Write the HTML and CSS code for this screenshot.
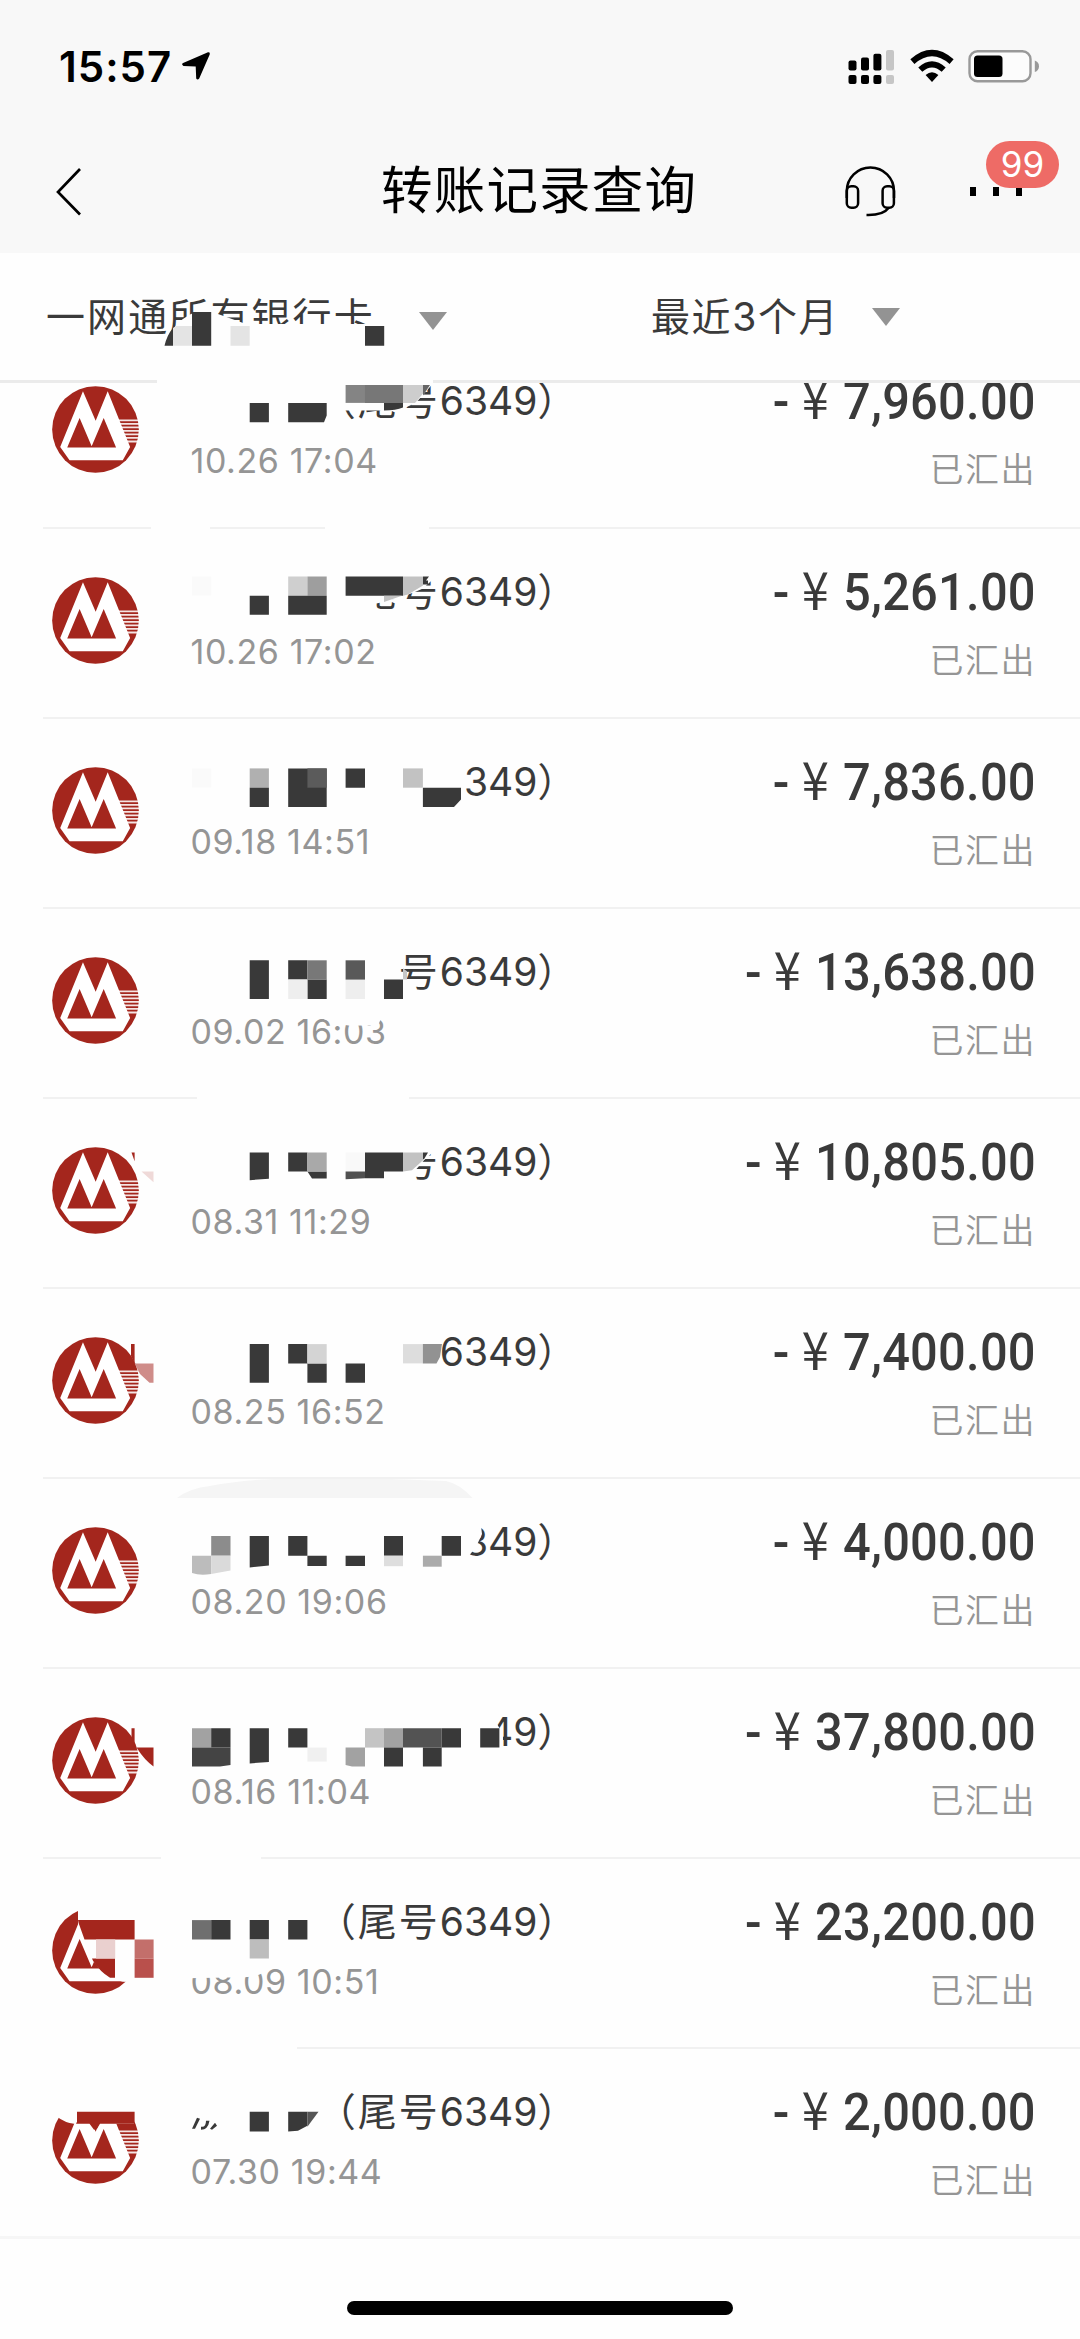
FILE: index.html
```html
<!DOCTYPE html>
<html lang="zh-CN">
<head>
<meta charset="utf-8">
<title>转账记录查询</title>
<link rel="stylesheet" href="styles.css">
</head>
<body>
<svg class="defs" width="0" height="0">
  <symbol id="cmb" viewBox="65.500 80 260 260">
    <circle cx="195.500" cy="210" r="129.500" fill="#a4261d"/>
    <path d="M262 180h64v5h-64zM262 190.500h64v5h-64zM262 201h64v5h-64zM262 211.500h64v5h-64zM262 222h64v5h-64zM262 232.500h64v5h-64zM262 243h64v6h-64z" fill="#fff" opacity=".88"/>
    <path d="M158 96L196 184L232 96L299 262L277 302H118L90 262Z" fill="#fff"/>
    <path d="M111 264L148 176L184 260L220 176L257 264Z" fill="#a4261d"/>
  </symbol>
</svg>
<div class="phone">
  <header class="top">
    <div class="status">
      <div class="clock">15:57</div>
      <svg class="loc" viewBox="0 0 30 30"><path d="M1.500 12.200L27 1.200Q29.500 .8 28.700 3.500L18.200 27.500Q16.500 29.500 15.200 27.500L14.700 15.500L2.500 15Q.3 13.800 1.500 12.200Z"/></svg>
      <svg class="sys" viewBox="848 49 192 36">
        <rect x="848.500" y="60.500" width="8" height="10" rx="2"/><rect x="861" y="57.500" width="8" height="13" rx="2"/><rect x="873.400" y="53.700" width="8" height="16.800" rx="2"/>
        <rect x="848.500" y="75" width="8" height="9" rx="2"/><rect x="861" y="75" width="8" height="9" rx="2"/><rect x="873.400" y="75" width="8" height="9" rx="2"/>
        <g fill="#c6c6c6"><rect x="886" y="50" width="8" height="20.500" rx="2"/><rect x="886" y="75" width="8" height="9" rx="2"/></g>
        <path d="M932 82L925.600 75Q932 69.500 938.400 75Z"/>
        <path d="M920.300 69.600Q932 59 943.700 69.600" fill="none" stroke="#000" stroke-width="6"/>
        <path d="M912.400 61.700Q932 44.500 951.600 61.700" fill="none" stroke="#000" stroke-width="6.200"/>
        <rect x="969.500" y="51.200" width="61" height="30" rx="8" fill="#fcfcfc" stroke="#999" stroke-width="2.400"/>
        <rect x="974" y="55.500" width="28.500" height="21.500" rx="3.500"/>
        <path d="M1034.800 60.500Q1039 62 1039 66.200Q1039 70.500 1034.800 72Z" fill="#999"/>
      </svg>
    </div>
    <div class="nav">
      <svg class="back" viewBox="0 0 30 50"><path d="M25 2L3 25L25 47.500" fill="none" stroke="#000" stroke-width="2.700"/></svg>
      <h1>转账记录查询</h1>
      <svg class="headset" viewBox="844 164 53 53" fill="none" stroke="#000" stroke-width="2.500">
        <path d="M846.800 197V190A23.600 23.600 0 0 1 894 190V197"/>
        <rect x="846.800" y="185.200" width="11.300" height="21.500" rx="4.500"/><rect x="882.600" y="185.200" width="11.300" height="21.500" rx="4.500"/>
        <path d="M888.500 207Q883 214.500 866.500 214"/>
      </svg>
      <div class="more">
        <svg class="dots" viewBox="0 0 52 9"><path d="M0 0h6v9H0zM23 0h6v9h-6zM46 0h6v9h-6z"/></svg>
        <span class="badge">99</span>
      </div>
    </div>
  </header>
  <section class="filters">
    <div class="filter card"><span>一网通所有银行卡</span><i class="arrow"></i></div>
    <div class="filter period"><span>最近3个月</span><i class="arrow"></i></div>
    <svg class="mosaic" viewBox="0 253 580 130" width="580" height="130">
      <path class="w" d="M164 346C170 330 182 315 200 311L218 314L246 324H386V350H164Z"/>
      <path class="w" d="M157 379H433V385H157Z"/>
      <path class="k" d="M164.500 345.700Q167 335 173 328V345.700ZM192 312h19.200v33.700H192zM365 326h19.200v19.700H365z"/>
      <path fill="#e4e4e4" d="M173 328L176 326H192V345.700H173ZM230.500 326h19.200v19.700h-19.200z"/>
    </svg>
  </section>
  <main class="list">
    <article class="row first">
      <svg class="logo"><use href="#cmb"/></svg>
      <div class="info"><div class="name"><span>（尾号</span>6349）</div><time>10.26 17:04</time></div>
      <div class="money"><div class="amount"><b>-</b><i>¥</i>7,960.00</div><div class="state">已汇出</div></div>
      <svg class="mosaic" viewBox="0 338.400 580 190.100">
        <path class="w" d="M335 372H433V384L418 401Q405 411 390 411H345Q337 412 335 415Z"/>
        <path fill="#848484" d="M345.600 384H365V403.300H345.600Z"/><path fill="#777" d="M365 384h38v19.300h-38z"/><path fill="#cdcdcd" d="M403 384H423V394L415 403.300H403Z"/><path fill="#666" d="M423 384H431L423 396Z"/>
        <path class="k" d="M249.700 403.300h19.200v19.400h-19.200zM288.200 403.300H326.700V416L324 422.700H288.200ZM384 403.300H403V408Q396 411 384 411Z"/>
        <path class="w" d="M151 525h59v6h-59zM325 525h104v6H325z"/>
      </svg>
    </article>
    <article class="row">
      <svg class="logo"><use href="#cmb"/></svg>
      <div class="info"><div class="name"><span>（尾号</span>6349）</div><time>10.26 17:02</time></div>
      <div class="money"><div class="amount"><b>-</b><i>¥</i>5,261.00</div><div class="state">已汇出</div></div>
      <svg class="mosaic" viewBox="0 528.500 580 190.100">
        <path class="w" d="M335 568H436V576L423 588Q410 594 390 600L372 604L370 614H335Z"/>
        <path fill="#fafafa" d="M192 576h19.200v19H192z"/><path fill="#cfcfcf" d="M288.200 576h19.200v19.300h-19.200z"/><path fill="#9e9e9e" d="M307.400 576h19.300v19.300h-19.300z"/>
        <path class="k" d="M249.700 595.300h19.200v19h-19.200zM288.200 595.300h38.500v19h-38.500zM345.600 576H403V595.300H345.600ZM423 576H429L426 580H428V584H423Z"/>
        <path fill="#c2c2c2" d="M403 576H423V585L408 594L403 595.300ZM384 595.300H402L384 601.500Z"/>
      </svg>
    </article>
    <article class="row">
      <svg class="logo"><use href="#cmb"/></svg>
      <div class="info"><div class="name">349）</div><time>09.18 14:51</time></div>
      <div class="money"><div class="amount"><b>-</b><i>¥</i>7,836.00</div><div class="state">已汇出</div></div>
      <svg class="mosaic" viewBox="0 718.600 580 190.100">
        <path fill="#fafafa" d="M192 768h19.200v19H192z"/><path fill="#b0b0b0" d="M249.700 768h19.200v19.500h-19.200z"/>
        <path class="k" d="M249.700 787.300h19.200v19.400h-19.200zM288.200 768h38.500v38.700h-38.500zM345.600 768H365V787.300H345.600ZM422.900 787.300H461V799L454 806.700H422.900Z"/>
        <path fill="#5b5b5b" d="M307.400 768h19.300v19.300h-19.300z"/><path fill="#c2c2c2" d="M403 768h19.900v19.300H403z"/>
      </svg>
    </article>
    <article class="row">
      <svg class="logo"><use href="#cmb"/></svg>
      <div class="info"><div class="name"><span>号</span>6349）</div><time>09.02 16:03</time></div>
      <div class="money"><div class="amount"><b>-</b><i>¥</i>13,638.00</div><div class="state">已汇出</div></div>
      <svg class="mosaic" viewBox="0 908.700 580 190.100">
        <path class="w" d="M316 1014Q325 1022 350 1025.500L378 1025L384 1012Z"/>
        <path class="k" d="M249.700 960h19.200v38.700h-19.200zM288.200 960h19.200v19.300h-19.200zM307.400 979.300h19.300v19.400h-19.300zM384 979.300h19v19.400h-19z"/>
        <path fill="#787878" d="M307.400 960h19.300v19.300h-19.300z"/><path fill="#eee" d="M288.200 979.300h19.200v19.400h-19.200zM345.600 979.300H365V998.700H345.600Z"/><path fill="#595959" d="M345.600 960H365V979.300H345.600Z"/><path fill="#c6c6c6" d="M403 968L407 971V979.300H403Z"/>
        <path class="w" d="M197 1095h212v6H197z"/>
      </svg>
    </article>
    <article class="row">
      <svg class="logo"><use href="#cmb"/></svg>
      <div class="info"><div class="name"><span>号</span>6349）</div><time>08.31 11:29</time></div>
      <div class="money"><div class="amount"><b>-</b><i>¥</i>10,805.00</div><div class="state">已汇出</div></div>
      <svg class="mosaic" viewBox="0 1098.800 580 190.100">
        <path class="w" d="M394 1140H434V1151L424 1160L412 1174V1184H394Z"/>
        <path class="k" d="M249.700 1152.300h19.200V1178.500L249.700 1180ZM288.200 1152.300h19.200v19h-19.200zM307.400 1171.300H326.700V1178.300H312ZM365 1152.300H403V1171.300H384V1178H365ZM423 1152.300H428L424 1159H423Z"/>
        <path fill="#a9a9a9" d="M307.400 1152.300h19.300v19h-19.300z"/><path fill="#f9f9f9" d="M345.600 1152.300H365V1171.300H345.600Z"/><path fill="#505050" d="M345.600 1171.300H365V1178L345.600 1179Z"/><path fill="#c2c2c2" d="M403 1152.300H423V1160L412 1170L403 1171.300Z"/>
        <path class="r" d="M131.500 1152.300H134.600V1161Z"/><path fill="#efd9d8" d="M141.500 1171.300H153.500V1182Z"/>
      </svg>
    </article>
    <article class="row">
      <svg class="logo"><use href="#cmb"/></svg>
      <div class="info"><div class="name">6349）</div><time>08.25 16:52</time></div>
      <div class="money"><div class="amount"><b>-</b><i>¥</i>7,400.00</div><div class="state">已汇出</div></div>
      <svg class="mosaic" viewBox="0 1288.900 580 190.100">
        <path class="k" d="M249.700 1344h19.200v38.700h-19.200zM288.200 1344h19.200v19.300h-19.200zM307.400 1363.300h19.300v19.400h-19.300zM345.600 1363.300H365V1382.700H345.600Z"/>
        <path fill="#d4d4d4" d="M307.400 1344h19.300v19.300h-19.300z"/><path fill="#ddd" d="M403 1344h19.900v19.300H403z"/><path fill="#929292" d="M422.900 1344H442L440 1357L436.500 1363.300H422.900Z"/>
        <path class="r" d="M131 1344H134.600V1363.300L131 1356Z"/><path fill="#cf8c89" d="M134.600 1363.300H153.500V1382.700H149.500L140 1374Z"/>
      </svg>
    </article>
    <article class="row">
      <svg class="logo"><use href="#cmb"/></svg>
      <div class="info"><div class="name">349）</div><time>08.20 19:06</time></div>
      <div class="money"><div class="amount"><b>-</b><i>¥</i>4,000.00</div><div class="state">已汇出</div></div>
      <svg class="mosaic" viewBox="0 1479 580 190.100">
        <path fill="#f5f5f5" d="M177 1498Q190 1488 210 1486Q240 1480 275 1479H390L446 1481Q460 1484 472.500 1498Z"/>
        <path class="w" d="M462 1518H480L482 1534L476 1547L468 1557L462 1560Z"/>
        <path fill="#8c8c8c" d="M211.200 1536h19.300v19.700h-19.300z"/><path fill="#bcbcbc" d="M192 1555.700H211.200V1574Q200 1576 192 1573Z"/><path fill="#dadada" d="M211.200 1555.700H230.500V1570.500L211.200 1574Z"/>
        <path class="k" d="M249.700 1536h19.200V1565.500L249.700 1567.500ZM288.200 1536h19.200v19.700h-19.200zM307.400 1555.700h19.300v10.200h-19.300zM345.600 1555.700H365V1565.900H345.600ZM384 1536h19v19.700h-19zM441.700 1536H461V1555.700H441.700Z"/>
        <path fill="#dedede" d="M384 1555.700h19v10.500h-19z"/><path fill="#ababab" d="M422.900 1555.700h18.800v11h-18.800z"/>
      </svg>
    </article>
    <article class="row">
      <svg class="logo"><use href="#cmb"/></svg>
      <div class="info"><div class="name">49）</div><time>08.16 11:04</time></div>
      <div class="money"><div class="amount"><b>-</b><i>¥</i>37,800.00</div><div class="state">已汇出</div></div>
      <svg class="mosaic" viewBox="0 1669.100 580 190.100">
        <path class="w" d="M478 1708H500L497 1724L503 1734V1750H478Z"/>
        <path fill="#a2a2a2" d="M192 1728.300h19.200v19.400H192zM384 1728.300h19v19.400h-19zM345.600 1747.700H365V1766.700H352L345.600 1765Z"/>
        <path fill="#444" d="M192 1747.700H230.500V1765L220 1766.700H192Z"/><path fill="#c4c4c4" d="M365 1728.300h19v19.400h-19z"/><path fill="#f0f0f0" d="M307.400 1747.700h19.300v14h-19.300z"/><path fill="#535353" d="M403 1728.300h38.700v19.400H403z"/>
        <path class="k" d="M211.200 1728.300h19.300v19.400h-19.300zM249.700 1728.300h19.200V1762L249.700 1763.500ZM288.200 1728.300h19.200v19.400h-19.200zM384 1747.700h19v19h-19zM422.900 1747.700h18.800v19h-18.800zM441.700 1728.300H461V1747.700H441.700ZM480.200 1728.300h19.200v19.400h-19.200z"/>
        <path class="r" d="M131.500 1728.300H134.600V1747.700L131.500 1742ZM136.500 1747.700H153.500V1766.500Q145 1761 136.500 1747.700Z"/>
        <path class="w" d="M161 1856h100v6H161z"/>
      </svg>
    </article>
    <article class="row">
      <svg class="logo"><use href="#cmb"/></svg>
      <div class="info"><div class="name"><span>（尾号</span>6349）</div><time>08.09 10:51</time></div>
      <div class="money"><div class="amount"><b>-</b><i>¥</i>23,200.00</div><div class="state">已汇出</div></div>
      <svg class="mosaic" viewBox="0 1859.200 580 190.100">
        <path class="w" d="M78 1900V1924L84.500 1940L91 1958L98 1967Q108 1979 123 1982L145 1983V1900Z"/>
        <path class="r" d="M78 1920.300H134.600V1939.700H84.500L78.500 1923ZM92 1958.700H115V1978H110Q100 1972 93 1961Z"/>
        <path fill="#ead0cf" d="M96 1939.700h19.200v19H96z"/><path fill="#c36f6b" d="M134.600 1939.700h19v19h-19z"/><path fill="#b9504c" d="M134.600 1958.700h19V1978h-19z"/>
        <path class="w" d="M185 1962H278L270 1969Q262 1976 245 1977.500L185 1978.500Z"/>
        <path fill="#6f6f6f" d="M192 1920.300h19.200v19.400H192z"/><path class="k" d="M211.200 1920.300h19.300v19.400h-19.300zM249.700 1920.300h19.200v19.400h-19.200zM288.200 1920.300h19.200v19.400h-19.200z"/><path fill="#bdbdbd" d="M249.700 1939.700h19.200v19h-19.200z"/>
        <path class="w" d="M40 2046h257v6H40z"/>
      </svg>
    </article>
    <article class="row last">
      <svg class="logo"><use href="#cmb"/></svg>
      <div class="info"><div class="name"><span>（尾号</span>6349）</div><time>07.30 19:44</time></div>
      <div class="money"><div class="amount"><b>-</b><i>¥</i>2,000.00</div><div class="state">已汇出</div></div>
      <svg class="mosaic" viewBox="0 2049.300 580 190.100">
        <path class="w" d="M50 2090H140V2112H134V2124H74Q65 2123 57 2117L50 2115Z"/>
        <path class="r" d="M77 2112H134.600V2124H115L100 2124L97 2129L94 2130L89.500 2124H76L77 2122Z"/>
        <path class="k" d="M192 2129L197 2118L200 2119L195 2129ZM201 2127Q206 2128 206 2121L209.500 2121Q208 2130 201 2130ZM210 2129L215 2123L217 2126L212 2130ZM249.700 2112h19.200v19.700h-19.200zM288.200 2112H307.400V2126L298 2131L288.200 2131.700Z"/>
        <path fill="#555" d="M307.400 2112H318.500L307.400 2127Z"/>
      </svg>
    </article>
  </main>
  <footer><div class="home"></div></footer>
</div>
</body>
</html>
```

FILE: styles.css
```css
* { box-sizing: border-box; }
body { margin: 0; background: #fefefe; color: #3a3a3a; font-family: Inter, "Noto Sans CJK SC", sans-serif; }
.defs { position: absolute; }
.phone { width: 1080px; height: 2339px; overflow: hidden; display: flex; flex-direction: column; }
svg { display: block; flex: none; }

.top { height: 253px; background: #f8f8f8; color: #000; flex: none; }
.status { height: 127px; display: flex; align-items: flex-start; padding: 49px 40px 0 59px; }
.clock { width: 122px; font-size: 42px; font-weight: 600; line-height: 36px; letter-spacing: 1px; white-space: nowrap; }
.loc { width: 30px; height: 30px; margin-top: 2px; }
.sys { width: 192px; height: 36px; margin-left: auto; }
.nav { height: 126px; display: flex; align-items: flex-start; padding: 0 21px 0 55px; }
.back { width: 30px; height: 50px; margin-top: 40px; }
h1 { margin: 23px 0 0 296px; width: 463px; font-size: 51.5px; line-height: 74px; font-weight: 400; letter-spacing: 1.200px; white-space: nowrap; font-family: "Noto Sans CJK SC", sans-serif; }
.headset { width: 53px; height: 53px; margin-top: 38px; }
.more { position: relative; width: 89px; margin-left: 73px; padding-top: 60px; }
.dots { width: 52px; height: 9px; }
.badge { position: absolute; left: 16px; top: 14px; width: 73px; height: 47px; border-radius: 24px; background: #ee6b66; color: #fff; font-size: 35px; line-height: 47px; font-weight: 400; text-align: center; }

.filters { position: relative; z-index: 1; height: 130px; flex: none; display: flex; border-bottom: 3px solid #ebebeb; background: #fefefe; }
.filter { display: flex; align-items: flex-start; font-size: 39px; line-height: 60px; padding-top: 34px; white-space: nowrap; }
.card { width: 651px; padding-left: 46px; letter-spacing: 2.100px; }
.card span { width: 373px; }
.period span { width: 221px; letter-spacing: 1.600px; }
.arrow { border: 14.500px solid transparent; border-bottom: 0; border-top: 18px solid #939393; margin-top: 21px; }
.card .arrow { margin-top: 25px; }

.mosaic { position: absolute; left: 0; top: 0; width: 580px; overflow: visible; }
.w { fill: #fefefe; }
.k { fill: #393939; }
.r { fill: #a4261d; }

.list { height: 1856.400px; flex: none; overflow: hidden; display: flex; flex-direction: column; justify-content: flex-end; }
.row { position: relative; height: 190.100px; flex: none; display: flex; align-items: flex-start; margin-left: 43px; padding: 48px 44px 0 8.500px; border-bottom: 2px solid #f1f1f1; }
.row .mosaic { left: -43px; height: 190.100px; }
.row.last { margin-left: 0; padding-left: 51.500px; border-bottom: 3px solid #f6f6f6; }
.row.last .mosaic { left: 0; }
.logo { width: 87px; height: 87px; }
.info { width: 386px; margin: -9px 0 0 52px; white-space: nowrap; }
.name { font-size: 39px; line-height: 48px; text-align: right; }
.name span { letter-spacing: 2px; }
time { display: block; margin-top: 12px; font-size: 34px; line-height: 48px; letter-spacing: .600px; color: #959595; }
.money { margin-left: auto; margin-top: -16px; text-align: right; white-space: nowrap; }
.amount { font-family: Roboto, sans-serif; font-weight: 500; font-size: 52.500px; line-height: 60px; letter-spacing: .250px; transform: scaleX(.93); transform-origin: right; }
.amount b { font-weight: 500; margin-right: 13px; }
.amount i { font-style: normal; font-weight: 400; font-family: "Noto Sans CJK SC", sans-serif; margin-right: 15px; line-height: 1; }
.state { font-family: "Noto Sans CJK SC", sans-serif; font-weight: 350; font-size: 34px; line-height: 48px; letter-spacing: 1.500px; margin-top: 13px; color: #959595; }

footer { flex: 1; display: flex; justify-content: center; align-items: flex-start; padding-top: 62px; }
.home { width: 386px; height: 14px; border-radius: 7px; background: #000; }
```
